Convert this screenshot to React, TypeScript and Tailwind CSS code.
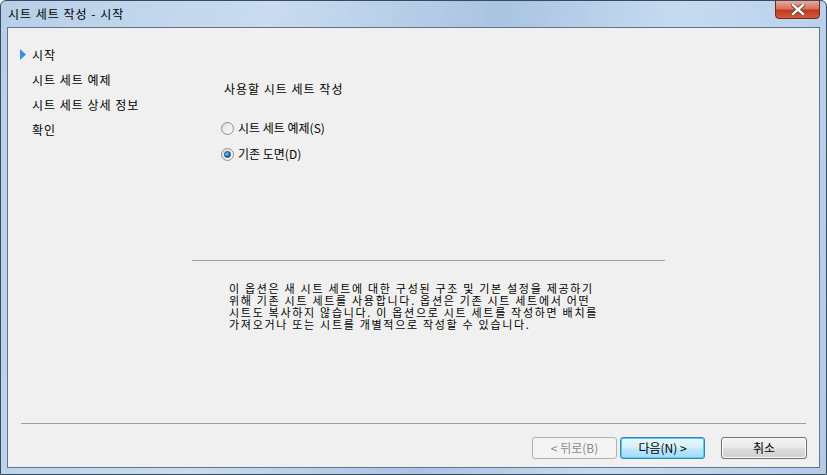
import React from "react";

const font = { fontFamily: '"Noto Sans CJK KR", "Noto Sans", sans-serif' };

function Radio({ checked }: { checked?: boolean }) {
  return (
    <span className="relative inline-flex h-[13px] w-[13px] items-center justify-center rounded-full border border-[#8f8f8f] bg-gradient-to-br from-[#dcdcdc] to-[#fbfbfb]">
      {checked ? (
        <span className="h-[7px] w-[7px] rounded-full border border-[#1b3f6a] bg-[radial-gradient(circle_at_35%_35%,#7fd0ff,#1d6fb8_60%,#0d3a73)]" />
      ) : (
        <span className="h-[7px] w-[7px] rounded-full bg-gradient-to-br from-[#e4e4e4] to-[#f7f7f7]" />
      )}
    </span>
  );
}

export default function App() {
  const nav = ["시작", "시트 세트 예제", "시트 세트 상세 정보", "확인"];
  return (
    <div
      className="relative flex h-[475px] w-[827px] flex-col overflow-hidden rounded-t-[6px] border border-[#3b4a5a] bg-[linear-gradient(100deg,#b7cfe8_0%,#c9dcf0_30%,#a9c4e2_55%,#c5dbf1_75%,#b2cce8_100%)] text-[12px] text-black"
      style={font}
    >
      {/* title bar */}
      <div className="flex h-[26px] shrink-0 items-center pl-[7px]">
        <span className="leading-none tracking-[1px]">시트 세트 작성 - 시작</span>
      </div>
      <div className="absolute right-[6px] top-[-1px] flex h-[19px] w-[45px] items-center justify-center rounded-b-[4px] border border-[#6b2a22] bg-[linear-gradient(#e9a99a_0%,#d8715c_45%,#c0391f_55%,#d35a3c_100%)]">
        <svg width="14" height="11" viewBox="0 0 14 11">
          <path d="M2 1 L12 10 M12 1 L2 10" stroke="#5a3a36" strokeWidth="4" strokeLinecap="square" />
          <path d="M2 1 L12 10 M12 1 L2 10" stroke="#ffffff" strokeWidth="2.4" strokeLinecap="square" />
        </svg>
      </div>

      {/* client area */}
      <div className="mx-[6px] mb-[6px] flex flex-1 flex-col border border-[#62748a] bg-[#f0f0f0]">
        <div className="flex h-[395px] shrink-0">
          {/* nav */}
          <div className="flex w-[184px] shrink-0 flex-col pt-[14px]">
            {nav.map((n, i) => (
              <div key={n} className="flex h-[25px] items-center">
                <span className="flex w-[24px] justify-end pr-[6px]">
                  {i === 0 ? (
                    <svg width="6" height="11" viewBox="0 0 6 11">
                      <path d="M0 0 L6 5.5 L0 11 Z" fill="#3b8ee8" />
                    </svg>
                  ) : null}
                </span>
                <span className="leading-none tracking-[1px]">{n}</span>
              </div>
            ))}
          </div>
          {/* right panel */}
          <div className="flex w-[473px] flex-col">
            <div className="pl-[32px] pt-[55px] leading-none tracking-[1px]">사용할 시트 세트 작성</div>
            <div className="mt-[26px] flex flex-col gap-[12px] pl-[29px]">
              <label className="flex h-[14px] items-center gap-[4px]">
                <Radio />
                <span className="leading-none">시트 세트 예제(S)</span>
              </label>
              <label className="flex h-[14px] items-center gap-[4px]">
                <Radio checked />
                <span className="leading-none">기존 도면(D)</span>
              </label>
            </div>
            <div className="mt-[99px] h-[1px] bg-[#a0a0a0]" />
            <div className="pl-[37px] pt-[21px] text-[11px] leading-[12px] tracking-[1.7px]">
              <div>이 옵션은 새 시트 세트에 대한 구성된 구조 및 기본 설정을 제공하기</div>
              <div>위해 기존 시트 세트를 사용합니다. 옵션은 기존 시트 세트에서 어떤</div>
              <div>시트도 복사하지 않습니다. 이 옵션으로 시트 세트를 작성하면 배치를</div>
              <div>가져오거나 또는 시트를 개별적으로 작성할 수 있습니다.</div>
            </div>
          </div>
        </div>
        <div className="mx-[13px] h-[1px] bg-[#a0a0a0]" />
        <div className="flex justify-end gap-[3px] pr-[12px] pt-[13px]">
          <button className="flex h-[22px] w-[85px] items-center justify-center rounded-[3px] border border-[#adb2b5] bg-[#f4f4f4] leading-none text-[#8a8a8a]">
            &lt; 뒤로(B)
          </button>
          <button className="flex h-[22px] w-[85px] items-center justify-center rounded-[3px] border border-[#3c7fb1] bg-[linear-gradient(#eaf6fd_0%,#d9f0fc_45%,#bee6fd_55%,#a7d9f5_100%)] leading-none shadow-[inset_0_0_0_1px_#48d0f5]">
            다음(N) &gt;
          </button>
          <button className="ml-[13px] flex h-[22px] w-[86px] items-center justify-center rounded-[3px] border border-[#707070] bg-[linear-gradient(#f2f2f2_0%,#ebebeb_45%,#dddddd_55%,#cfcfcf_100%)] leading-none shadow-[inset_0_0_0_1px_#fcfcfc]">
            취소
          </button>
        </div>
      </div>
    </div>
  );
}
